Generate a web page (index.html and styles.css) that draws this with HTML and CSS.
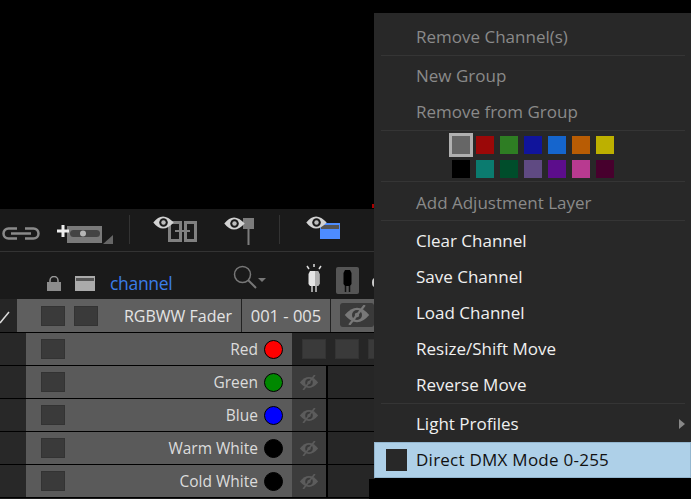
FILE: index.html
```html
<!DOCTYPE html>
<html lang="en">

<head>
  <meta charset="UTF-8">
  <title>Channel Menu</title>
  <link rel="stylesheet" href="styles.css">
</head>

<body>
  <svg class="defs" width="0" height="0">
    <symbol id="eye" viewBox="0 0 22 14">
      <path d="M0 7 Q10 -6 22 7 Q10 20 0 7Z" fill="#d2d2d2" />
      <circle cx="11" cy="7" r="4.600" fill="#1a1a1a" />
      <circle cx="11" cy="7" r="2.400" fill="#bdbdbd" />
    </symbol>
    <symbol id="eyeoff" viewBox="0 0 22 18">
      <path d="M0 9 Q11 -4 22 9 Q11 22 0 9Z" fill="currentColor" />
      <circle cx="11" cy="9" r="4.500" fill="#3a3a3a" />
      <circle cx="11" cy="9" r="2" fill="currentColor" />
      <path d="M4 18 L18 0" stroke="currentColor" stroke-width="2" />
    </symbol>
  </svg>

  <div class="panel">
    <!-- top toolbar -->
    <div class="toolbar">
      <svg class="ic-link" width="38" height="13" viewBox="0 0 38 13">
        <g fill="none" stroke="#8a8a8a" stroke-width="2.500">
          <path d="M15 1.500H6.500a5 5 0 0 0 0 10H15" />
          <path d="M23 1.500H31.500a5 5 0 0 1 0 10H23" />
          <path d="M9 6.500H29" />
        </g>
      </svg>
      <svg class="ic-add" width="56" height="20" viewBox="0 0 56 20">
        <rect x="10" y="2" width="35" height="17" fill="#7a7a7a" />
        <rect x="13" y="6" width="30" height="7" rx="3.500" fill="#444" />
        <circle cx="26" cy="9.500" r="3" fill="#b5b5b5" />
        <path d="M0 7H12M6 1V13" stroke="#eee" stroke-width="3" />
        <path d="M56 11V20H46Z" fill="#666" />
      </svg>
      <span class="tool-sep first"></span>
      <svg class="ic-group" width="44" height="28" viewBox="0 0 44 28">
        <g fill="none" stroke="#808080" stroke-width="3">
          <rect x="16.500" y="7.500" width="11" height="18" />
          <rect x="32.500" y="7.500" width="10" height="18" />
        </g>
        <path d="M22 16H37" stroke="#808080" stroke-width="2" />
        <use href="#eye" x="0" y="1" width="21" height="13" />
      </svg>
      <svg class="ic-flag" width="30" height="29" viewBox="0 0 30 29">
        <rect x="19" y="2" width="11" height="11" fill="#7c7c7c" />
        <rect x="23.500" y="13" width="2" height="16" fill="#7c7c7c" />
        <use href="#eye" x="0" y="1" width="21" height="13" />
      </svg>
      <span class="tool-sep second"></span>
      <svg class="ic-layer" width="34" height="24" viewBox="0 0 34 24">
        <rect x="14" y="7" width="20" height="16" fill="#4d8cff" />
        <rect x="15" y="9" width="18" height="4" fill="#555" />
        <use href="#eye" x="0" y="0" width="21" height="13" />
      </svg>
    </div>

    <!-- column header -->
    <div class="header">
      <svg class="ic-lock" width="14" height="15" viewBox="0 0 14 15">
        <path d="M3 7V4.500a4 4 0 0 1 8 0V7" fill="none" stroke="#999" stroke-width="1.500" />
        <rect y="6" width="14" height="9" fill="#8c8c8c" />
      </svg>
      <svg class="ic-win" width="20" height="15" viewBox="0 0 20 15">
        <rect width="20" height="15" fill="#aaa" />
        <rect x="1" y="2" width="18" height="3" fill="#555" />
      </svg>
      <span class="channel">channel</span>
      <svg class="ic-search" width="34" height="24" viewBox="0 0 34 24">
        <circle cx="9.500" cy="9.500" r="8" fill="none" stroke="#777" stroke-width="1.500" />
        <path d="M15 15L23 23" stroke="#777" stroke-width="2" />
        <path d="M25 13H33L29 17Z" fill="#777" />
      </svg>
      <svg class="ic-bulb" width="16" height="28" viewBox="0 0 16 28">
        <path d="M4 7H12L13.500 10V20L12 22H4L2.500 20V10Z" fill="#e4e4e4" />
        <path d="M9 7H12L13.500 10V20L12 22H9Z" fill="#b0b0b0" />
        <path d="M6 22V28M10 22V28" stroke="#ccc" stroke-width="1.500" />
        <path d="M8 0V3M1 2L3 5M15 2L13 5" stroke="#ddd" stroke-width="1.500" />
      </svg>
      <span class="bulb-btn">
        <svg width="11" height="22" viewBox="0 0 11 22">
          <path d="M3 0H8L9.500 3V14L8 16H3L1.500 14V3Z" fill="#000" />
          <path d="M3.500 16V22M7.500 16V22" stroke="#111" stroke-width="1.500" />
        </svg>
      </span>
      <span class="edge-dot"></span>
    </div>

    <!-- fader row -->
    <div class="fader">
      <span class="fader-check">
        <svg width="17" height="33" viewBox="0 0 17 33">
          <path d="M0 24L9 13" stroke="#ddd" stroke-width="1.500" />
        </svg>
      </span>
      <div class="fader-name">
        <span class="box"></span>
        <span class="box second-box"></span>
        <span class="fader-label">RGBWW Fader</span>
      </div>
      <div class="fader-addr">001 - 005</div>
      <div class="fader-eye">
        <span class="eye-btn"><svg width="26" height="20">
            <use href="#eyeoff" />
          </svg></span>
      </div>
    </div>

    <!-- channel rows -->
    <div class="row">
      <span class="row-left"></span>
      <div class="row-main">
        <span class="box"></span>
        <span class="row-label">Red</span>
        <span class="dot red"></span>
      </div>
      <div class="row-btns">
        <span class="box dim"></span>
        <span class="box dim"></span>
        <span class="box dim"></span>
      </div>
    </div>
    <div class="row">
      <span class="row-left"></span>
      <div class="row-main">
        <span class="box"></span>
        <span class="row-label">Green</span>
        <span class="dot green"></span>
      </div>
      <div class="row-eye"><svg width="20" height="15">
          <use href="#eyeoff" />
        </svg></div>
      <div class="row-rest"></div>
    </div>
    <div class="row">
      <span class="row-left"></span>
      <div class="row-main">
        <span class="box"></span>
        <span class="row-label">Blue</span>
        <span class="dot blue"></span>
      </div>
      <div class="row-eye"><svg width="20" height="15">
          <use href="#eyeoff" />
        </svg></div>
      <div class="row-rest"></div>
    </div>
    <div class="row">
      <span class="row-left"></span>
      <div class="row-main">
        <span class="box"></span>
        <span class="row-label">Warm White</span>
        <span class="dot"></span>
      </div>
      <div class="row-eye"><svg width="20" height="15">
          <use href="#eyeoff" />
        </svg></div>
      <div class="row-rest"></div>
    </div>
    <div class="row">
      <span class="row-left"></span>
      <div class="row-main">
        <span class="box"></span>
        <span class="row-label">Cold White</span>
        <span class="dot"></span>
      </div>
      <div class="row-eye"><svg width="20" height="15">
          <use href="#eyeoff" />
        </svg></div>
      <div class="row-rest"></div>
    </div>
  </div>

  <!-- context menu -->
  <div class="menu">
    <div class="item off line">Remove Channel(s)</div>
    <div class="item off">New Group</div>
    <div class="item off line">Remove from Group</div>
    <div class="swatches line">
      <span class="swatch picked" style="background:#666"></span>
      <span class="swatch" style="background:#9b0808"></span>
      <span class="swatch" style="background:#2e7d23"></span>
      <span class="swatch" style="background:#10149b"></span>
      <span class="swatch" style="background:#1565cd"></span>
      <span class="swatch" style="background:#b85c04"></span>
      <span class="swatch" style="background:#bdb000"></span>
      <span class="swatch" style="background:#000"></span>
      <span class="swatch" style="background:#0b7b6f"></span>
      <span class="swatch" style="background:#004d2b"></span>
      <span class="swatch" style="background:#5f4a82"></span>
      <span class="swatch" style="background:#5c0d8c"></span>
      <span class="swatch" style="background:#b83a90"></span>
      <span class="swatch" style="background:#47002d"></span>
    </div>
    <div class="item off line">Add Adjustment Layer</div>
    <div class="item">Clear Channel</div>
    <div class="item">Save Channel</div>
    <div class="item">Load Channel</div>
    <div class="item">Resize/Shift Move</div>
    <div class="item line">Reverse Move</div>
    <div class="item has-sub">Light Profiles<span class="sub-arrow"></span></div>
    <div class="item hover"><span class="hover-box"></span><span class="hover-text">Direct DMX Mode 0-255</span></div>
  </div>
  <span class="corner"></span>
  <span class="red-tick"></span>
</body>

</html>
```

FILE: styles.css
```css
html,
body {
  margin: 0;
  height: 499px;
  overflow: hidden;
}

body {
  position: relative;
  background-color: #000;
  font-family: "Open Sans", sans-serif;
}

.defs {
  position: absolute;
}

svg {
  display: block;
  flex: none;
}

.panel {
  width: 375px;
  height: 290px;
  position: absolute;
  top: 209px;
  left: 0;
  background-color: #1a1a1a;
  overflow: hidden;
}

/* toolbar */
.toolbar {
  height: 43px;
  box-sizing: border-box;
  border-bottom: 1px solid #333;
  display: flex;
  align-items: flex-start;
}

.ic-link {
  margin: 18px 0 0 2px;
}

.ic-add {
  margin: 15px 0 0 17px;
}

.tool-sep {
  width: 1px;
  height: 29px;
  margin-top: 6px;
  background-color: #333;
}

.tool-sep.first {
  margin-left: 16px;
}

.tool-sep.second {
  margin-left: 25px;
}

.ic-group {
  margin: 6px 0 0 23px;
}

.ic-flag {
  margin: 7px 0 0 27px;
}

.ic-layer {
  margin: 7px 0 0 26px;
}

/* header row */
.header {
  height: 47px;
  display: flex;
  align-items: flex-start;
}

.ic-lock {
  margin: 24px 0 0 47px;
}

.ic-win {
  margin: 24px 0 0 14px;
}

.channel {
  flex: none;
  margin: 19px 0 0 15px;
  width: 62px;
  color: #3b7de8;
  font-size: 17.500px;
  line-height: 24px;
  letter-spacing: -0.3px;
}

.ic-search {
  margin: 13px 0 0 61px;
}

.ic-bulb {
  margin: 12px 0 0 39px;
}

.bulb-btn {
  flex: none;
  margin: 15px 0 0 14px;
  width: 23px;
  height: 27px;
  background-color: #555;
  border-radius: 2px;
  display: flex;
  align-items: center;
  justify-content: center;
}

.edge-dot {
  flex: none;
  width: 6px;
  height: 9px;
  margin: 26px 0 0 13px;
  border-radius: 50%;
  background-color: #ccc;
}

/* fader row */
.fader {
  height: 34px;
  box-sizing: border-box;
  border-bottom: 1px solid #000;
  display: flex;
  color: #e4e4e4;
  font-size: 15.500px;
}

.fader-check {
  width: 17px;
  background-color: #262626;
}

.fader-name {
  width: 225px;
  display: flex;
  align-items: center;
  padding-left: 24px;
  box-sizing: border-box;
  background-color: #5f5f5f;
  border-right: 1px solid #222;
}

.second-box {
  margin-left: 9px;
}

.fader-label {
  margin-left: auto;
  padding-right: 9px;
  font-size: 16px;
}

.fader-addr {
  width: 88px;
  line-height: 33px;
  font-size: 16.500px;
  text-align: center;
  background-color: #5f5f5f;
  border-right: 1px solid #222;
}

.fader-eye {
  flex: 1;
  padding: 4px 0 0 9px;
  background-color: #5f5f5f;
}

.eye-btn {
  width: 34px;
  height: 24px;
  display: flex;
  align-items: center;
  justify-content: center;
  border-radius: 3px;
  color: #787878;
  background-color: #3a3a3a;
}

.box {
  width: 24px;
  height: 20px;
  box-sizing: border-box;
  flex: none;
  background-color: #3a3a3a;
  border: 1px solid #333;
}

/* channel rows */
.row {
  height: 33px;
  box-sizing: border-box;
  border-bottom: 1px solid #000;
  display: flex;
  color: #dcdcdc;
  font-size: 15.500px;
}

.row-left {
  flex: none;
  width: 26px;
  background-color: #282828;
}

.row-main {
  flex: none;
  width: 266px;
  box-sizing: border-box;
  padding: 0 9px 0 15px;
  display: flex;
  align-items: center;
  background-color: #5a5a5a;
}

.row-label {
  margin-left: auto;
  margin-right: 6px;
}

.dot {
  flex: none;
  width: 19px;
  height: 19px;
  box-sizing: border-box;
  border-radius: 50%;
  border: 1px solid #000;
  background-color: #000;
}

.dot.red {
  background-color: #f00;
}

.dot.green {
  background-color: #080;
}

.dot.blue {
  background-color: #00f;
}

.row-btns {
  flex: 1;
  display: flex;
  align-items: center;
  gap: 9px;
  padding-left: 10px;
  background-color: #262626;
}

.row-eye {
  flex: none;
  width: 34px;
  display: flex;
  align-items: center;
  justify-content: center;
  color: #5c5c5c;
  background-color: #3c3c3c;
}

.row-rest {
  flex: 1;
  border-left: 2px solid #000;
  background-color: #262626;
}

/* context menu */
.menu {
  position: absolute;
  top: 13px;
  left: 374px;
  width: 317px;
  height: 465px;
  padding-top: 6px;
  box-sizing: border-box;
  background-color: #282828;
  font-size: 17px;
}

.item {
  height: 36px;
  line-height: 36px;
  padding-left: 42px;
  color: #f0f0f0;
}

.item.off {
  color: #8a8a8a;
}

.line {
  position: relative;
  margin-bottom: 2px;
}

.item.line {
  height: 37px;
}

.line::after {
  content: "";
  position: absolute;
  left: 7px;
  right: 6px;
  bottom: 0;
  height: 1px;
  background-color: #353535;
}

.swatches {
  height: 51px;
  box-sizing: border-box;
  margin-top: -2px;
  margin-bottom: 3px;
  padding: 5px 0 0 78px;
  display: grid;
  grid-template-columns: repeat(7, 18px);
  grid-auto-rows: 18px;
  gap: 6px;
}

.swatches + .item.line {
  height: 36px;
}

.swatch.picked {
  outline: 3px solid #b0b0b0;
}

.has-sub {
  position: relative;
}

.sub-arrow {
  position: absolute;
  right: 6px;
  top: 13px;
  border-left: 6px solid #888;
  border-top: 5px solid transparent;
  border-bottom: 5px solid transparent;
}

.item.hover {
  height: 36px;
  line-height: 34px;
  color: #111;
  background-color: #aed0e8;
  border: 1px solid #93b6cf;
  box-sizing: border-box;
  padding-left: 41px;
  position: relative;
}

.hover-text {
  letter-spacing: 0.25px;
}

.hover-box {
  position: absolute;
  left: 11px;
  top: 6px;
  width: 21px;
  height: 22px;
  background-color: #282828;
}

.corner {
  position: absolute;
  left: 369px;
  top: 479px;
  width: 322px;
  height: 20px;
  background-color: #000;
}

.red-tick {
  position: absolute;
  left: 372px;
  top: 204px;
  width: 2px;
  height: 4px;
  background-color: #a00;
}
```
